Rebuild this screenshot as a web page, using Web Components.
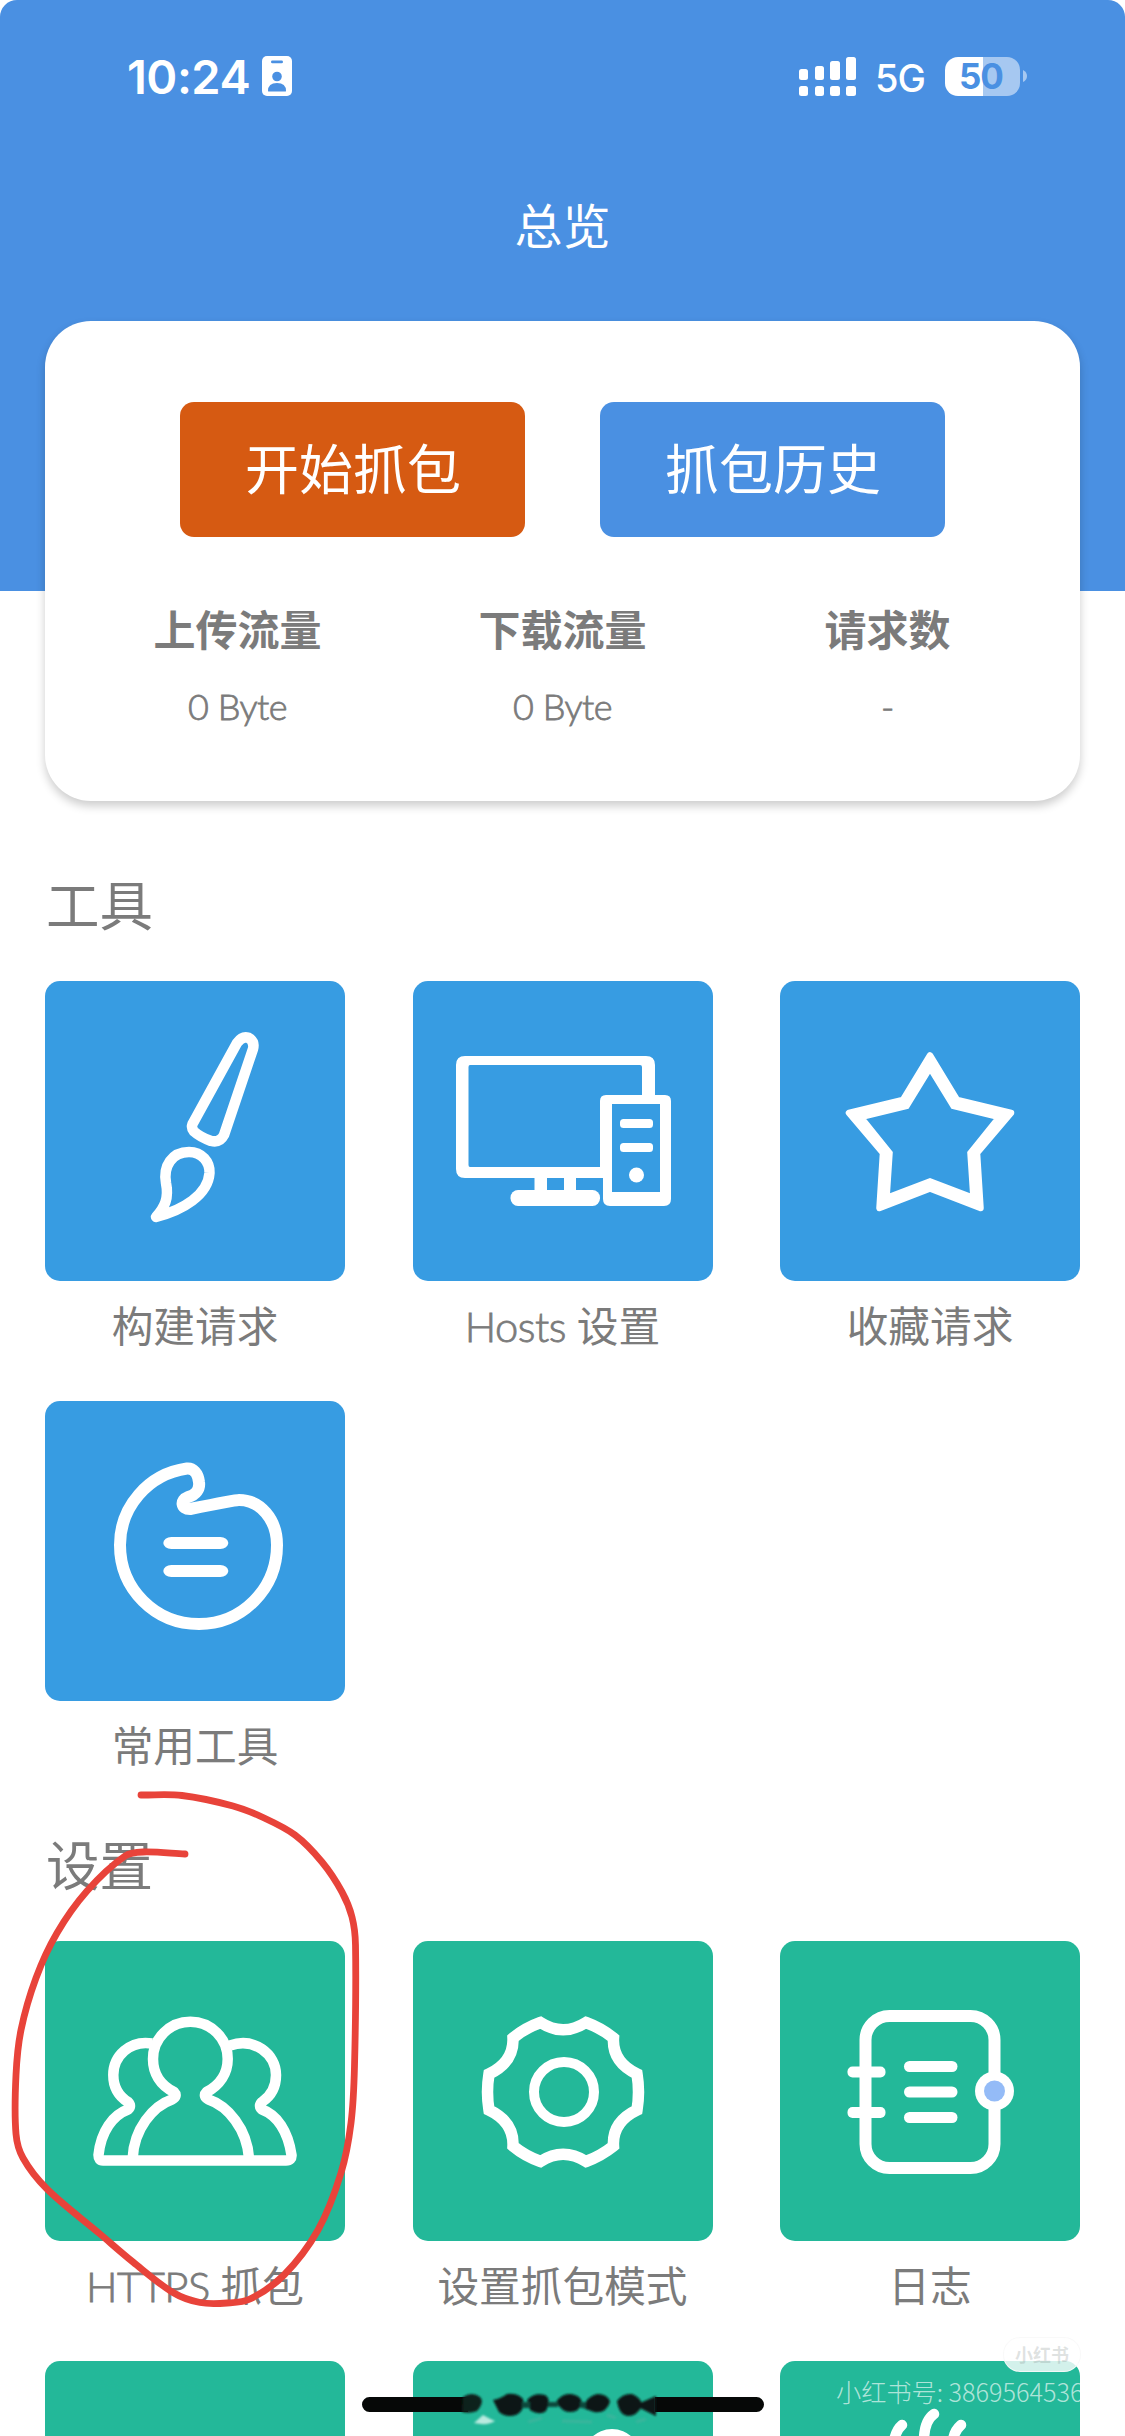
<!DOCTYPE html>
<html lang="zh-CN">
<head>
<meta charset="utf-8">
<title>总览</title>
<style>
html,body{margin:0;padding:0}
body{width:1125px;height:2436px;overflow:hidden;background:#fff;font-family:Lato,"Noto Sans CJK SC",sans-serif;color:#7b7b7b}
</style>
</head>
<body>
<capture-app></capture-app>
<script>
const define = (name, html, setup) => customElements.define(name, class extends HTMLElement {
  constructor() {
    super();
    this.attachShadow({ mode: 'open' });
  }
  connectedCallback() {
    const t = document.createElement('template');
    t.innerHTML = html;
    this.shadowRoot.replaceChildren(t.content.cloneNode(true));
    if (setup) setup(this, this.shadowRoot);
  }
});

define('status-bar', `
<style>
:host{display:flex;align-items:center;justify-content:space-between;height:60px;margin-top:46px;padding:0 98px 0 127px;color:#fff;font-family:Inter,sans-serif}
div{display:flex;align-items:center}
.time{font-size:47px;font-weight:600;line-height:60px;letter-spacing:-.5px;width:135px;white-space:nowrap;margin-top:1px}
.net{font-size:38px;font-weight:500;line-height:60px;margin:4px 1px 0 19px;width:69px;letter-spacing:-1px}
.batt{width:75px;height:39px;border-radius:13px;justify-content:center;background:linear-gradient(90deg,#fff 38px,#a6c8f1 38px);color:#4a90e2;font-size:35px;font-weight:700;letter-spacing:-1px;line-height:39px;text-indent:-3px}
.right{height:39px}
.tip{margin-left:3px}
</style>
<div><span class="time">10:24</span>
<svg width="30" height="40" viewBox="0 0 30 40"><rect width="30" height="40" rx="5" fill="#fff"/><rect x="9" y="4.500" width="12" height="2.800" rx="1.400" fill="#4a90e2"/><ellipse cx="15" cy="20.500" rx="4.800" ry="4.800" fill="#4a90e2"/><path d="M6 35Q6 27 15 27T24 35Q24 35.500 23 35.500H7Q6 35.500 6 35Z" fill="#4a90e2"/></svg></div>
<div class="right">
<svg width="57" height="39" viewBox="0 0 57 39" fill="#fff"><rect y="12" width="9" height="11" rx="2.500"/><rect x="16" y="9" width="9" height="14" rx="2.500"/><rect x="31" y="4" width="10" height="19" rx="2.500"/><rect x="47" width="10" height="23" rx="2.500"/><rect y="29" width="9" height="10" rx="2.500"/><rect x="16" y="29" width="9" height="10" rx="2.500"/><rect x="31" y="29" width="10" height="10" rx="2.500"/><rect x="47" y="29" width="10" height="10" rx="2.500"/></svg>
<span class="net">5G</span><div class="batt">50</div>
<svg class="tip" width="4" height="12" viewBox="0 0 4 12"><path d="M0 0Q4 2 4 6T0 12Z" fill="#a6c8f1"/></svg>
</div>`);

define('page-header', `
<style>
:host{display:flow-root;height:591px;box-sizing:border-box;background:#4a90e2;border-radius:17px 17px 0 0}
h1{margin:90px 0 0;font-size:48px;font-weight:400;line-height:60px;text-align:center;color:#fff}
</style>
<status-bar></status-bar><h1><slot></slot></h1>`);

define('action-button', `
<style>
:host{display:flex;align-items:center;justify-content:center;width:345px;height:135px;border-radius:14px;background:var(--bg,#4a90e2);color:#fff;font-size:54px;line-height:60px;box-sizing:border-box;padding:1px 0 0 1px}
</style><slot></slot>`);

define('stat-cell', `
<style>
:host{display:flex;flex-direction:column;align-items:center;width:325px}
b{font-size:42px;line-height:60px;font-weight:700}
span{font-size:36px;font-weight:300;line-height:50px;margin-top:21px;-webkit-text-stroke:.8px currentColor;letter-spacing:-.5px}
</style><b><slot></slot></b><span></span>`, (el, root) => {
  root.querySelector('span').textContent = el.getAttribute('value');
});

define('summary-card', `
<style>
:host{display:flex;flex-direction:column;position:relative;height:480px;margin:-270px 45px 0;background:#fff;border-radius:46px;box-shadow:0 5px 10px rgba(0,0,0,.2);box-sizing:border-box;padding:81px 30px 0}
.row{display:flex;justify-content:center}
.buttons{gap:75px}
.stats{margin-top:63px}
</style>
<div class="row buttons"><slot name="actions"></slot></div>
<div class="row stats"><slot></slot></div>`);

define('section-title', `
<style>:host{display:block;margin:var(--top,59px) 46px 46px;font-size:53.500px;line-height:60px}</style><slot></slot>`);

define('tile-grid', `
<style>:host{display:grid;grid-template-columns:repeat(3,300px);justify-content:space-between;row-gap:45px;margin:0 45px}</style><slot></slot>`);

const icons = {
  brush: `<g stroke-width="10.5" stroke-linejoin="round"><path d="M147.5 143L192 62Q197 55 203 56.5Q210 60 208 68L179 154Q175 162 166 160Q155 156 149 150.5Q146 147 147.5 143Z"/><path d="M111 236C120 226 124 217 121 202C118 185 127 171 144 171C157 171 165 181 164.500 192C163 214 138 229 111 236Z"/></g>`,
  hosts: `<g fill="#fff" stroke="none"><path fill-rule="evenodd" d="M52 75H233Q242 75 242 84V114H229V86Q229 84 227 84H57Q55.500 84 55.500 86V184Q55.500 186 57 186H190V197H52Q43 197 43 188V84Q43 75 52 75Z"/><path fill-rule="evenodd" d="M193 114H252Q258 114 258 120V218Q258 225 251 225H197Q190 225 190 218V197L187 190V120Q187 114 193 114ZM199 123V211H247V123Z"/><rect x="207" y="138" width="33" height="9" rx="3.500"/><rect x="207" y="162" width="33" height="9" rx="3.500"/><circle cx="223.500" cy="194" r="7.500"/><rect x="121.500" y="195" width="12.500" height="16"/><rect x="151" y="195" width="12" height="16"/><rect x="97.500" y="209" width="89.500" height="16" rx="7.500"/></g>`,
  star: `<g stroke-width="6.500"><path stroke-linejoin="round" d="M150 74.500L177 119L231 132L197 172L200.500 227L150 207.500L99.500 227L103 172L69 132L123 119Z"/><path stroke-width="5" d="M150 81L175 122L225 134L194 172L197 222L150 204L103 222L106 172L75 134L125 122Z"/><path d="M150 86.500L173.500 125L219.500 136L190.500 172L193.500 217L150 200.500L106.500 217L109.500 172L80.500 136L126.500 125Z"/></g>`,
  common: `<path stroke-width="12" stroke-linejoin="round" d="M142 67.500C103 73 75 106 75 144C75 188 110 223 154 223C197 223 232 188 232 144C232 118 215 99 194 99C190 99 150 107 145 108C136 108 135 99 143 96C151 94 155 88 154 81C153 72 148 67 142 67.500Z"/><g fill="#fff" stroke="none"><rect x="118.300" y="136" width="65" height="12" rx="8" ry="6"/><rect x="118.300" y="164" width="65" height="12" rx="8" ry="6"/></g>`,
  people: `<g stroke-width="10.500" stroke-linejoin="round"><path d="M87.700 217C89 188 108 165 127 158.500Q133 155 129 151C115 144 108 132 108 118A37.350 37.350 0 0 1 182.700 118C182.700 132 175 144 161.600 151Q157.500 155 163.500 158.500C183 165 202 188 204 217"/><path d="M107 102.500C85 99 68.300 115 68.300 134C68.300 147 75 156 83 161Q87 165 83 168.500C68 174 56 190 53.500 214Q53.500 219.500 58 219.500H241Q247 219.500 246.500 214C243 190 232 174 217 168.500Q213 165 217 161C226 155 231 146 231 134C231 113 209 96 185 104.500"/></g>`,
  gear: `<path stroke-width="11.500" d="M127.500 81.500Q150 96 173 81.500Q188 87 200.500 97Q199 121 224 133Q227 151 224 169Q199 181 200.500 205Q188 215 173 220.500Q150 206 127.500 220.500Q112 215 100 205Q101 181 76 169Q73 151 76 133Q101 121 100 97Q112 87 127.500 81.500Z"/><circle cx="151" cy="151" r="30" stroke-width="10"/>`,
  log: `<rect x="85.500" y="75" width="129" height="152" rx="24" stroke-width="12"/><g fill="#fff" stroke="none"><rect x="67.500" y="125.500" width="38" height="11" rx="5"/><rect x="67.500" y="166" width="38" height="11" rx="5"/><rect x="124" y="120" width="53.500" height="11" rx="5.500"/><rect x="124" y="145.500" width="53.500" height="11" rx="5.500"/><rect x="124" y="171" width="53.500" height="11" rx="5.500"/><circle cx="214.500" cy="150" r="19.500"/></g><circle cx="214.500" cy="150" r="10.500" fill="#94bbf7" stroke="none"/>`,
  knob: `<circle cx="199" cy="97" r="29" fill="#fff" stroke="none"/>`,
  steam: `<path stroke-width="10.500" stroke-linecap="round" d="M154 53Q144 60 144 80M122 64Q116 69 114 80M181 64Q174 70 173 80"/>`,
  none: ``
};

define('tool-tile', `
<style>
:host{display:flex;flex-direction:column;width:300px;height:375px}
svg{display:block;width:300px;height:300px;border-radius:15px;background:var(--tile,#379ce2)}
span{display:block;width:320px;margin:15px 0 0 -10px;height:60px;line-height:60px;font-size:41.700px;text-align:center;white-space:nowrap}
</style>
<svg viewBox="0 0 300 300" fill="none" stroke="#fff"></svg><span><slot></slot></span>`, (el, root) => {
  root.querySelector('svg').innerHTML = icons[el.getAttribute('icon')];
});

define('hand-circle', `
<style>:host{display:block;position:absolute;left:0;top:1780px;pointer-events:none}svg{display:block}</style>
<svg width="380" height="540" viewBox="0 1780 380 540"><path fill="none" stroke="#e8433a" stroke-width="6.800" stroke-linecap="round" stroke-linejoin="round"/></svg>`, (el, root) => {
  const p = [[141,1795],[182,1795.5],[233,1806],[262,1817],[295,1835],[322,1862],[342,1892],[352,1917],[355.5,1945],[354.5,2066],[351,2123],[341,2173],[318,2230],[284,2275],[250,2299],[227,2303],[200,2302.5],[173,2292.5],[133,2262],[100,2234],[47,2189],[23,2158],[16,2134],[16,2075],[21,2030],[36,1978],[57,1933],[87,1891],[125,1856],[143,1852],[185,1854]];
  // Smooth curve through the sampled points of the stroke; each tangent runs parallel to its neighbours' chord.
  const len = (a, b) => Math.hypot(a[0] - b[0], a[1] - b[1]);
  const dir = p.map((q, i) => {
    const a = p[i - 1] || q, b = p[i + 1] || q, l = len(a, b);
    return [(b[0] - a[0]) / l, (b[1] - a[1]) / l];
  });
  let d = 'M' + p[0];
  for (let i = 0; i < p.length - 1; i++) {
    const k = len(p[i], p[i + 1]) / 3;
    d += 'C' + [p[i][0] + dir[i][0] * k, p[i][1] + dir[i][1] * k, p[i + 1][0] - dir[i + 1][0] * k, p[i + 1][1] - dir[i + 1][1] * k, ...p[i + 1]];
  }
  root.querySelector('path').setAttribute('d', d);
});

define('home-indicator', `
<style>:host{display:block;position:absolute;left:362px;top:2385px}svg{display:block}</style>
<svg width="402" height="45" viewBox="362 2385 402 45">
<defs><filter id="soft" x="-20%" y="-50%" width="140%" height="200%"><feGaussianBlur stdDeviation="1.300"/></filter></defs>
<path d="M369.500 2397H468V2412H369.500A7.500 7.500 0 0 1 369.500 2397ZM655 2397H756.500A7.500 7.500 0 0 1 756.500 2412H655Z" fill="#060807"/>
<g filter="url(#soft)"><path d="M463 2397Q472 2391 480 2397Q485 2402 477 2411Q470 2414 462 2412Z" fill="#10201c"/>
<path d="M493 2400Q500 2399 507 2394Q518 2393 523 2399Q526 2410 516 2415Q506 2418 499 2412ZM527 2400Q534 2392 545 2395Q552 2399 546 2411Q540 2416 530 2410ZM556 2402Q562 2393 571 2394Q580 2395 582 2402Q580 2412 570 2412Q562 2412 556 2402ZM583 2408Q587 2396 597 2394Q608 2394 610 2402Q606 2414 594 2412ZM617 2401Q623 2393 632 2394Q642 2398 642 2406Q637 2416 628 2416Q619 2415 617 2401ZM640 2403L656 2396V2416L640 2408Z" fill="#0a1613"/>
<path d="M522 2402H530V2408H522ZM548 2402H558V2407H548ZM580 2402H586V2408H580Z" fill="#0f4a3e"/>
<path d="M483 2415Q490 2419 495 2421Q488 2426 474 2423Z" fill="#b9eadf"/>
<path d="M528 2422L542 2418M562 2421L592 2422M607 2415L616 2418M636 2422L646 2419" stroke="#4db39f" stroke-width="3" opacity=".55"/></g>
</svg>`);

define('water-mark', `
<style>
:host{display:flex;flex-direction:column;align-items:flex-start;position:absolute;left:836px;top:2337px;width:260px}
.badge{margin-left:167px;box-sizing:border-box;width:78px;height:35px;border-radius:17px;background:rgba(255,255,255,.8);border:1px solid rgba(248,248,248,.9);font:700 18px/33px "Noto Sans CJK SC",sans-serif;color:rgba(130,140,138,.25);text-align:center}
.id{font:300 25.200px/36px "Noto Sans CJK SC",sans-serif;color:rgba(255,255,255,.65);white-space:nowrap;margin-top:1px}
</style><span class="badge">小红书</span><span class="id">小红书号: 3869564536</span>`);

define('capture-app', `
<style>
:host{display:block;position:relative;width:1125px;height:2436px;overflow:hidden}
.settings{--tile:#23b899}
.latin{font-weight:300;-webkit-text-stroke:.8px currentColor;letter-spacing:-.5px}
</style>
<page-header>总览</page-header>
<summary-card>
<action-button slot="actions" style="--bg:#d65a12">开始抓包</action-button>
<action-button slot="actions">抓包历史</action-button>
<stat-cell value="0 Byte">上传流量</stat-cell>
<stat-cell value="0 Byte">下载流量</stat-cell>
<stat-cell value="-">请求数</stat-cell>
</summary-card>
<section-title style="--top:74px">工具</section-title>
<tile-grid>
<tool-tile icon="brush">构建请求</tool-tile>
<tool-tile icon="hosts"><span class="latin">Hosts </span>设置</tool-tile>
<tool-tile icon="star">收藏请求</tool-tile>
<tool-tile icon="common">常用工具</tool-tile>
</tile-grid>
<section-title>设置</section-title>
<tile-grid class="settings">
<tool-tile icon="people"><span class="latin">HTTPS </span>抓包</tool-tile>
<tool-tile icon="gear">设置抓包模式</tool-tile>
<tool-tile icon="log">日志</tool-tile>
<tool-tile icon="none"></tool-tile>
<tool-tile icon="knob"></tool-tile>
<tool-tile icon="steam"></tool-tile>
</tile-grid>
<hand-circle></hand-circle>
<home-indicator></home-indicator>
<water-mark></water-mark>`);
</script>
</body>
</html>
